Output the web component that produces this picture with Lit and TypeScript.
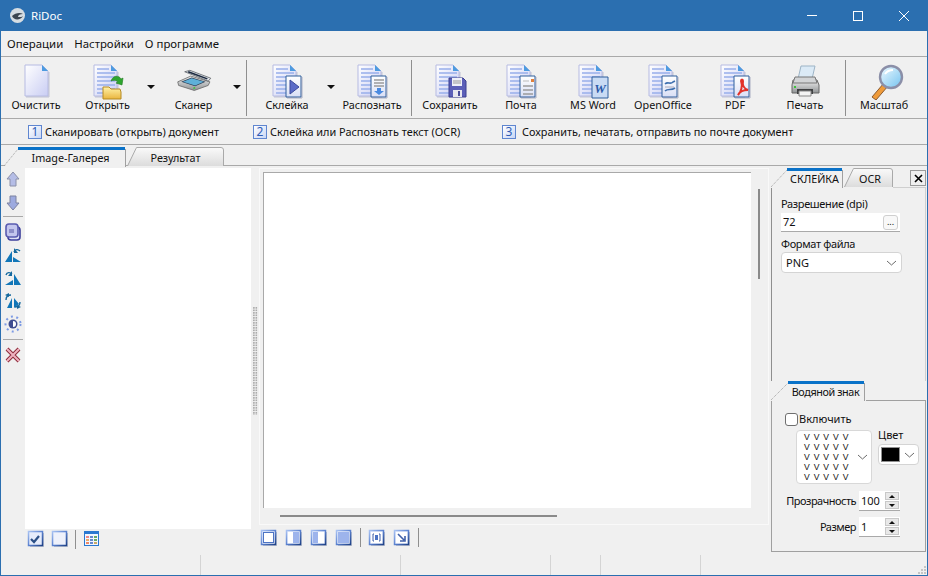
import {LitElement, css, html, svg} from 'lit';
import {customElement} from 'lit/decorators.js';

const defs = svg`
  <defs>
    <linearGradient id="page" x1="0" y1="0" x2="1" y2="1">
      <stop offset="0" stop-color="#ffffff"/>
      <stop offset="1" stop-color="#c9cdf3"/>
    </linearGradient>
    <linearGradient id="sub" x1="0" y1="0" x2="0" y2="1">
      <stop offset="0" stop-color="#ffffff"/>
      <stop offset="1" stop-color="#d9dff5"/>
    </linearGradient>
    <linearGradient id="glass" x1="0" y1="0" x2="1" y2="1">
      <stop offset="0" stop-color="#f2fbff"/>
      <stop offset="1" stop-color="#72c2f0"/>
    </linearGradient>
    <linearGradient id="folder" x1="0" y1="0" x2="0" y2="1">
      <stop offset="0" stop-color="#fff2a8"/>
      <stop offset="1" stop-color="#eab53e"/>
    </linearGradient>
    <linearGradient id="grey" x1="0" y1="0" x2="0" y2="1">
      <stop offset="0" stop-color="#f0f0f0"/>
      <stop offset="1" stop-color="#8f9294"/>
    </linearGradient>
    <linearGradient id="edge" x1="0" y1="0" x2="1" y2="1">
      <stop offset="0" stop-color="#a8c2f2"/>
      <stop offset=".5" stop-color="#5b82d0"/>
      <stop offset="1" stop-color="#1f4288"/>
    </linearGradient>
  </defs>`;

const big = (body: unknown) => html`<svg class="big" width="44" height="36" viewBox="0 0 44 36">${defs}${body}</svg>`;

// page with the folded corner, optionally ruled with blue lines
const page = (x: number, lines = true) => svg`
  <path d="M${x} 1h17l6 6v25h-23z" fill="url(#page)" stroke="#b6bbe2"/>
  <path d="M${x + 17} 1v6h6z" fill="#4d9be0"/>
  <path d="M${x + 1} 33h23v-25" fill="none" stroke="#8f93b8" opacity=".5"/>
  ${lines ? [5, 9, 13, 17, 21, 25, 29].map(y => svg`<path d="M${x + 3} ${y}h${y < 9 ? 12 : 18}" stroke="#9db2ec" stroke-width="1.6"/>`) : ''}`;

const subDoc = (body: unknown) => svg`
  <path d="M21 12h15v21h-15z" fill="url(#sub)" stroke="#2f5f9c"/>
  <path d="M37 13v21h-15" fill="none" stroke="#7f87a6" opacity=".6"/>
  ${body}`;

const toolbarIcons: Record<string, unknown> = {
  clear: big(svg`${page(11, false)}`),
  open: big(svg`${page(8)}
    <path d="M17 33v-10h6l2 2h9l1 3v7h-18z" fill="url(#folder)" stroke="#b58a22"/>
    <path d="M25 17c2-6 8-6 10-2l2-1-1 7-6-2 2-1c-2-2-5-2-7-1z" fill="#2ea62e" stroke="#1e7a1e" stroke-width=".6"/>`),
  scanner: big(svg`<g transform="translate(4 2) scale(.87 .72)">
    <path d="M2 22l15-8 22 8-2 5-16 7-18-7z" fill="url(#grey)" stroke="#666"/>
    <path d="M6 22l12-6 16 6-12 6z" fill="#2b3b52"/>
    <path d="M8 22l10-5 14 5-10 5z" fill="#5fb0d8"/>
    <path d="M10 8l6-2 24 11-3 4-6-3z" fill="#dfe3e8" stroke="#5b6065"/>
    <path d="M14 8l22 10" stroke="#1c2a40" stroke-width="2"/>
    <path d="M20 31l2-1" stroke="#32c832" stroke-width="2"/></g>`),
  glue: big(svg`${page(8)}${subDoc(svg`
    <path d="M25 16v14l9-7z" fill="#5c6cc8" stroke="#3c4b9c"/>`)}`),
  ocr: big(svg`${page(8)}${subDoc(svg`
    <path d="M24 16h10M24 19h10M24 22h10" stroke="#9a9a9a" stroke-width="1.4"/>
    <path d="M27 24h4v3h3l-5 4-5-4h3z" fill="#4a8ae0"/>`)}`),
  save: big(svg`${page(8)}
    <path d="M21 14h14l3 3v16h-17z" fill="#5b5fb8" stroke="#3d4090"/>
    <path d="M24 14h10v8h-10z" fill="#eef0f8"/>
    <path d="M25 17h8M25 19h8" stroke="#999"/>
    <path d="M25 26h9v7h-9z" fill="#e8e8f0"/>
    <path d="M30 27h2v5h-2z" fill="#4a4d99"/>`),
  mail: big(svg`${page(8)}${subDoc(svg`
    <path d="M24 22h10M24 26h10M24 30h10" stroke="#9a9a9a" stroke-width="1.4"/>
    <path d="M32 15h3v3h-3z" fill="#e2803a"/>
    <path d="M24 17h6" stroke="#bbb"/>`)}`),
  word: big(svg`${page(8)}
    <path d="M21 13h16v21h-16z" fill="#c9dbf4" stroke="#2f5f9c"/>
    <text x="29" y="29" text-anchor="middle" class="w">W</text>`),
  office: big(svg`${page(8)}${subDoc(svg`
    <path d="M24 20c3-3 5 1 8-2l2-1M24 27c3-3 6 0 10-3" fill="none" stroke="#3e6fae" stroke-width="1.6"/>
    <path d="M24 23h9" stroke="#aab"/>`)}`),
  pdf: big(svg`${page(8)}${subDoc(svg`
    <path d="M25 31c3-3 5-9 3-14 0-2 2-2 2 0-1 5 2 8 5 9-3 0-8 1-10 5z" fill="none" stroke="#e2322a" stroke-width="2"/>`)}`),
  print: big(svg`
    <path d="M18 2h14l-3 13h-14z" fill="#dbeaf6" stroke="#9db4c6"/>
    <path d="M10 16h24l2 5v8h-27v-8z" fill="url(#grey)" stroke="#666"/>
    <path d="M12 13h20l2 6h-24z" fill="#d2d4d6" stroke="#777"/>
    <path d="M14 25h16v5h-16z" fill="#3f4042"/>
    <path d="M16 27h12v5h-12z" fill="#f4f4f4" stroke="#888"/>
    <path d="M11 23h2" stroke="#3ac43a" stroke-width="2"/>`),
  zoom: big(svg`
    <path d="M10 33l12-14 4 3-12 14z" fill="#ef9b3a" stroke="#8a5a30"/>
    <circle cx="29" cy="13" r="11" fill="url(#glass)" stroke="#8b8fa8" stroke-width="2.4"/>
    <path d="M23 10c2-3 5-4 8-4" stroke="#fff" stroke-width="2" fill="none"/>`),
};

const small = (body: unknown, w = 18, h = 18) => html`<svg class="small" width=${w} height=${h} viewBox="0 0 18 18">${defs}${body}</svg>`;

const sideIcons = {
  up: small(svg`<path d="M9 2l6 7h-3v7h-6v-7h-3z" fill="#b5bde6" stroke="#8b90a8"/>`),
  down: small(svg`<path d="M9 16l6-7h-3v-7h-6v7h-3z" fill="#9daadf" stroke="#7d82a0"/>`),
  pages: small(svg`<rect x="4" y="4" width="12" height="13" rx="3" fill="#dfe1f6" stroke="#3c3f9c" stroke-width="1.6"/><rect x="2" y="1" width="12" height="13" rx="3" fill="#c3c6ee" stroke="#5a5cb0" stroke-width="1.6"/><path d="M5 6h5v4h-5z" fill="#8d8fc8"/>`),
  left: small(svg`<path d="M1 16l7-11v11zM9 16v-5l8 5z" fill="#1176b8"/><path d="M10 6c1-3 4-3 6-1" fill="none" stroke="#14689e" stroke-width="1.4"/><path d="M10 2v5h4z" fill="#14689e"/>`),
  right: small(svg`<path d="M17 16l-7-11v11zM9 16v-5l-8 5z" fill="#1176b8"/><path d="M2 6c1-3 4-3 6-1" fill="none" stroke="#14689e" stroke-width="1.4"/><path d="M8 2v5h-4z" fill="#14689e"/>`),
  flip: small(svg`<path d="M3 16l5-10v10zM10 6v10l5-4z" fill="#1176b8"/><path d="M2 8c0-3 2-5 5-5M16 10c0 3-2 5-5 5" fill="none" stroke="#14689e" stroke-width="1.4"/><path d="M1 3l4-2v4zM17 15l-4 2v-4z" fill="#14689e"/>`),
  bright: small(svg`<circle cx="9" cy="9" r="4.500" fill="#3f4d90"/><path d="M9 6a3 3 0 0 1 0 6z" fill="#fff"/><g stroke="#7c9ae4" stroke-width="2" stroke-dasharray="2 3.500" fill="none"><circle cx="9" cy="9" r="7.500"/></g>`),
  del: small(svg`<path d="M3 3l12 12M15 3l-12 12" stroke="#8d2b3a" stroke-width="4"/><path d="M3 3l12 12M15 3l-12 12" stroke="#efb2c0" stroke-width="2"/>`),
};

// square blue-framed button of the lower toolbars
const frame = (inner: unknown) => small(svg`
  <rect x="3" y="3" width="14" height="14" fill="#7d8aa8" opacity=".45"/>
  <rect x="1.500" y="1.500" width="14" height="14" fill="#e6ecfb" stroke="url(#edge)" stroke-width="1.500"/>
  ${inner}`);

const bottomIcons = {
  check: frame(svg`<path d="M4 9l3 3 5-6" fill="none" stroke="#2b4f86" stroke-width="2.200"/>`),
  blank: frame(svg`<rect x="3" y="3" width="11" height="11" fill="#eef1fb"/>`),
  grid: small(svg`<rect x="1.500" y="1.500" width="14" height="14" fill="#f2f6fe" stroke="#2a78d0"/><path d="M1 1h15v3h-15z" fill="#2a78d0"/>
    <path d="M3 6h3v2h-3z" fill="#e88"/><path d="M7 6h3v2h-3z" fill="#68c"/><path d="M11 6h3v2h-3z" fill="#6a6"/>
    <path d="M3 9h3v2h-3z" fill="#ea6"/><path d="M7 9h3v2h-3z" fill="#68c"/><path d="M11 9h3v2h-3z" fill="#6a6"/>
    <path d="M3 12h3v2h-3z" fill="#e86"/><path d="M7 12h3v2h-3z" fill="#68c"/><path d="M11 12h3v2h-3z" fill="#ca6"/>`),
  white: frame(svg`<rect x="3.500" y="3.500" width="10" height="10" fill="#fff" stroke="#4d74c4"/>`),
  halfR: frame(svg`<rect x="3" y="3" width="5" height="11" fill="#fff"/><rect x="8" y="3" width="6" height="11" fill="#9db4ec"/>`),
  halfL: frame(svg`<rect x="3" y="3" width="5" height="11" fill="#9db4ec"/><rect x="8" y="3" width="6" height="11" fill="#fff"/>`),
  full: frame(svg`<rect x="3" y="3" width="11" height="11" fill="#9db4ec"/>`),
  fit: frame(svg`<rect x="3" y="3" width="11" height="11" fill="#fff"/><path d="M6 5h-1v7h1M11 5h1v7h-1" fill="none" stroke="#3f5fa8"/><rect x="7" y="6" width="3" height="5" fill="#4d74c4"/>`),
  arrow: frame(svg`<rect x="3" y="3" width="11" height="11" fill="#fff"/><path d="M5 5l6 6M12 7v5h-5" fill="none" stroke="#3f5fa8" stroke-width="1.600"/>`),
};

const chevron = html`<svg class="chev" width="11" height="6" viewBox="0 0 11 6"><path d="M1 1l4.500 4 4.500-4" fill="none" stroke="#6a6a6a"/></svg>`;

const arrowDown = html`<svg class="drop" width="8" height="4" viewBox="0 0 8 4"><path d="M0 0h8l-4 4z" fill="#111"/></svg>`;

const spin = html`<span class="spin">
  <span class="sb"><svg width="6" height="3"><path d="M3 0l3 3h-6z" fill="#111"/></svg></span>
  <span class="sb"><svg width="6" height="3"><path d="M0 0h6l-3 3z" fill="#111"/></svg></span>
</span>`;

@customElement('app-root')
export class AppRoot extends LitElement {
  static styles = css`
    :host {
      box-sizing: border-box;
      display: flex;
      flex-direction: column;
      width: 928px;
      height: 576px;
      overflow: hidden;
      border: solid #2b6fb0;
      border-width: 0 1px 1px;
      background: #f0f0f0;
      font: 12px/14px "Noto Sans", sans-serif;
      color: #111;
    }

    * {
      box-sizing: border-box;
    }

    svg {
      display: block;
      flex: none;
    }

    .title {
      display: flex;
      align-items: center;
      flex: none;
      height: 31px;
      margin: 0 -1px;
      padding: 0 0 0 9px;
      background: #2b6fb0;
      color: #fff;
    }

    .title .name {
      margin-left: 5px;
      font-size: 11.500px;
    }

    .win {
      display: flex;
      margin-left: auto;
      padding-right: 1px;
    }

    .win span {
      display: flex;
      justify-content: center;
      align-items: center;
      width: 46px;
      height: 31px;
    }

    .menu {
      display: flex;
      flex: none;
      gap: 11px;
      align-items: center;
      height: 26px;
      padding-left: 6px;
      border-bottom: 1px solid #a9a9a9;
      font-size: 11.400px;
    }

    .tools {
      display: flex;
      flex: none;
      height: 62px;
      border-bottom: 1px solid #a9a9a9;
    }

    .tool {
      display: flex;
      flex-direction: column;
      align-items: center;
      padding-top: 7px;
      white-space: nowrap;
      font-size: 10.800px;
    }

    .tool .label {
      margin-top: -2px;
    }

    .drop-slot {
      display: flex;
      justify-content: center;
      align-items: center;
      height: 60px;
    }

    .bar-sep {
      width: 1px;
      height: 56px;
      margin-top: 3px;
      background: #8f8f8f;
    }

    .steps {
      display: flex;
      flex: none;
      align-items: center;
      height: 26px;
      padding-left: 27px;
      border-bottom: 1px solid #a9a9a9;
      font-size: 10.900px;
    }

    .step {
      display: flex;
      align-items: center;
      gap: 3px;
      white-space: nowrap;
    }

    .num {
      width: 14px;
      height: 14px;
      border: 1px solid #5f86d0;
      background: linear-gradient(135deg, #fff, #c9d6f5);
      color: #2e5bb5;
      font-size: 12px;
      line-height: 12px;
      text-align: center;
    }

    .tabs {
      display: flex;
      flex: none;
      height: 21px;
      padding: 2px 0 0 3px;
      border-bottom: 1px solid #a9a9a9;
    }

    .tab {
      position: relative;
      display: flex;
      justify-content: center;
      align-items: center;
      flex: none;
      font-size: 10.800px;
      white-space: nowrap;
    }

    .tab svg {
      position: absolute;
      top: 0;
      left: 0;
    }

    .tab span {
      position: relative;
      top: 1px;
    }

    .main {
      display: flex;
      flex: 1;
      min-height: 0;
    }

    .left {
      display: flex;
      flex: none;
      flex-direction: column;
      width: 250px;
    }

    .left-top {
      display: flex;
      flex: 1;
      min-height: 0;
    }

    .side {
      display: flex;
      flex: none;
      flex-direction: column;
      align-items: center;
      width: 24px;
      padding-top: 2px;
    }

    .side .small {
      margin: 2px 0 3px;
    }

    .side .gap {
      height: 1px;
    }

    .side hr {
      width: 20px;
      height: 1px;
      margin: 1px 0 4px;
      border: 0;
      background: #a9a9a9;
    }

    .side hr.low {
      margin: 3px 0 4px;
    }

    .gallery {
      flex: 1;
      margin-top: 2px;
      background: #fff;
    }

    .foot {
      display: flex;
      flex: none;
      align-items: center;
      height: 23px;
      padding-bottom: 3px;
    }

    .foot.g {
      padding-left: 26px;
      gap: 6px;
    }

    .foot.g .rule + .small {
      margin-left: 1px;
    }

    .foot .rule {
      width: 1px;
      height: 19px;
      background: #8f8f8f;
    }

    .split {
      display: flex;
      flex: none;
      justify-content: center;
      width: 8px;
      padding-top: 141px;
    }

    .split i {
      width: 5px;
      height: 108px;
      background: radial-gradient(circle at 1px 1px, #aaa 0.8px, transparent 1px) 0 0 / 2.500px 2.500px;
    }

    .center {
      display: flex;
      flex: none;
      flex-direction: column;
      width: 510px;
      padding-top: 2px;
    }

    .viewer {
      display: flex;
      flex-direction: column;
      flex: 1;
      min-height: 0;
      padding: 3px 1px 0 3px;
      border: 1px solid #f9f9f9;
    }

    .view-top {
      display: flex;
      flex: 1;
      min-height: 0;
    }

    .canvas {
      flex: 1;
      border-top: 1px solid #a9a9a9;
      border-left: 1px solid #a9a9a9;
      background: #fff;
    }

    .vscroll {
      flex: none;
      width: 16px;
      padding: 17px 0 0 7px;
    }

    .vscroll i {
      display: block;
      width: 2px;
      height: 90px;
      background: #8a8a8a;
    }

    .hscroll {
      flex: none;
      height: 16px;
      padding: 7px 0 0 17px;
    }

    .hscroll i {
      display: block;
      width: 277px;
      height: 2px;
      background: #8a8a8a;
    }

    .foot.c {
      height: 27px;
      padding: 0 0 2px 1px;
      gap: 7px;
    }

    .right {
      display: flex;
      flex: 1;
      flex-direction: column;
      min-width: 0;
      padding: 2px 1px 0 2px;
    }

    .r-head {
      display: flex;
      flex: none;
      height: 20px;
    }

    .r-fill {
      display: flex;
      flex: 1;
      justify-content: flex-end;
      height: 20px;
      border-bottom: 1px solid #cfcfcf;
    }

    .close {
      display: flex;
      justify-content: center;
      align-items: center;
      width: 16px;
      height: 16px;
      margin-top: 2px;
      border: 1px solid #9a9a9a;
    }

    .r-body {
      display: flex;
      flex-direction: column;
      flex: none;
      height: 193px;
      padding: 9px 0 0 9px;
      border-left: 1px solid #8f8f8f;
      border-right: 1px solid #cfcfcf;
      font-size: 11px;
    }

    .field-label {
      height: 15px;
      letter-spacing: -.35px;
    }

    .input {
      display: flex;
      align-items: center;
      justify-content: space-between;
      width: 119px;
      height: 19px;
      margin-top: 1px;
      padding: 0 2px;
      background: #fff;
      border-bottom: 1px solid #a9a9a9;
    }

    .dots {
      width: 15px;
      height: 15px;
      border: 1px solid #cfcfcf;
      border-radius: 3px;
      background: #f8f8f8;
      font-size: 9px;
      line-height: 11px;
      text-align: center;
    }

    .select {
      display: flex;
      align-items: center;
      justify-content: space-between;
      width: 121px;
      height: 21px;
      padding: 0 4px;
      border: 1px solid #d4d4d4;
      border-radius: 4px;
      background: #fff;
    }

    .wm-box {
      display: flex;
      flex: 1;
      flex-direction: column;
      min-height: 0;
      border: 1px solid #a0a0a0;
      border-top: 0;
      font-size: 11px;
    }

    .wm-head {
      display: flex;
      flex: none;
      height: 20px;
    }

    .wm-head .tab {
      letter-spacing: -.4px;
    }

    .wm-line {
      flex: 1;
      border-bottom: 1px solid #a0a0a0;
    }

    .check {
      display: flex;
      align-items: center;
      gap: 1px;
      margin: 11px 0 0 13px;
    }

    .check i {
      width: 13px;
      height: 13px;
      border: 1px solid #6f6f6f;
      border-radius: 3px;
      background: #fff;
    }

    .pattern-row {
      display: flex;
      gap: 6px;
      margin: 4px 0 0 24px;
    }

    .pattern {
      display: flex;
      align-items: center;
      justify-content: space-between;
      width: 76px;
      height: 54px;
      padding: 0 3px 0 5px;
      border: 1px solid #d8d8d8;
      border-radius: 4px;
      background: #fff;
    }

    .vs {
      display: grid;
      grid-template-columns: repeat(5, 9.700px);
      grid-auto-rows: 10px;
      font: 8.600px/10px "Liberation Sans", sans-serif;
      text-align: center;
    }

    .color-label {
      margin-top: -2px;
    }

    .color {
      display: flex;
      align-items: center;
      justify-content: space-between;
      width: 41px;
      height: 21px;
      margin-top: 2px;
      padding: 0 3px 0 2px;
      border: 1px solid #d4d4d4;
      border-radius: 4px;
      background: #fff;
    }

    .swatch {
      width: 19px;
      height: 15px;
      border: 1px solid #909090;
      background: #000;
    }

    .spin-row {
      display: flex;
      align-items: center;
      justify-content: flex-end;
      gap: 3px;
      width: 128px;
      height: 20px;
      letter-spacing: -.5px;
    }

    .spin-row .val {
      display: flex;
      align-items: center;
      justify-content: space-between;
      width: 41px;
      height: 20px;
      padding: 0 1px 0 2px;
      background: #fff;
      border-bottom: 1px solid #a9a9a9;
      letter-spacing: 0;
    }

    .spin {
      display: flex;
      flex-direction: column;
      gap: 1px;
    }

    .sb {
      display: flex;
      justify-content: center;
      align-items: center;
      width: 14px;
      height: 8px;
      border: 1px solid #c8c8c8;
      background: #e8e8e8;
    }

    .status {
      display: flex;
      flex: none;
      height: 23px;
      padding-top: 3px;
      padding-left: 199px;
    }

    .status i {
      width: 1px;
      height: 20px;
      background: #d4d4d4;
    }

    .grip {
      align-self: flex-end;
      margin-left: auto;
    }

    .w {
      font: italic 700 13px "Liberation Serif", serif;
      fill: #2a5aa8;
    }
  `;

  private toolItem(icon: string, label: string, width: number) {
    return html`
      <div class="tool" style="width:${width}px">
        ${toolbarIcons[icon]}
        <span class="label">${label}</span>
      </div>
    `;
  }

  private tabShape(w: number, active: boolean, h: number, d: number) {
    if (active) {
      return html`<svg width=${w} height=${h + 1} viewBox="0 0 ${w} ${h + 1}">
        <path d="M0 ${h + 1}L${d} 2h${w - d - 2}V${h + 1}z" fill="#f0f0f0"/>
        <path d="M0 ${h}L${d} 2" fill="none" stroke="#a0a0a0" stroke-dasharray="1 1"/>
        <path d="M${w - 1.500} 2V${h + 1}" stroke="#a0a0a0"/>
        <path d="M${d} 1.500h${w - d - 2}" stroke="#0a72c8" stroke-width="3"/>
      </svg>`;
    }
    return html`<svg width=${w} height=${h} viewBox="0 0 ${w} ${h}">
      <defs><linearGradient id="tabg" x1="0" y1="0" x2="0" y2="1"><stop offset="0" stop-color="#fafafa"/><stop offset="1" stop-color="#dcdcdc"/></linearGradient></defs>
      <path d="M.5 ${h}L9 1.500a1 1 0 0 1 1-1H${w - 3}a2.500 2.500 0 0 1 2.500 2.500V${h}" fill="url(#tabg)" stroke="#a9a9a9"/>
    </svg>`;
  }

  // pad pushes the caption past the slanted left edge
  private tab(label: string, w: number, active: boolean, pad = 0, d = 14, h = 19) {
    return html`
      <div class="tab" style="width:${w}px;height:${active ? h + 1 : h}px;padding-left:${pad}px">
        ${this.tabShape(w, active, h, d)}
        <span>${label}</span>
      </div>
    `;
  }

  render() {
    return html`
      <div class="title">
        <svg width="17" height="17" viewBox="0 0 17 17">
          <circle cx="8.500" cy="8.500" r="7.500" fill="#d6dde2"/>
          <path d="M3 9c3-3 8-4 11-2-3 0-5 1-5 3 3 0 4 0 5-1-2 4-9 5-11 0z" fill="#3c4650"/>
        </svg>
        <span class="name">RiDoc</span>
        <div class="win">
          <span><svg width="10" height="1"><path d="M0 .5h10" stroke="#fff"/></svg></span>
          <span><svg width="10" height="10"><rect x=".5" y=".5" width="9" height="9" fill="none" stroke="#fff"/></svg></span>
          <span><svg width="10" height="10"><path d="M0 0l10 10M10 0l-10 10" stroke="#fff"/></svg></span>
        </div>
      </div>

      <div class="menu">
        <span>Операции</span>
        <span>Настройки</span>
        <span>О программе</span>
      </div>

      <div class="tools">
        ${this.toolItem('clear', 'Очистить', 70)}
        ${this.toolItem('open', 'Открыть', 73)}
        <div class="drop-slot" style="width:13px">${arrowDown}</div>
        ${this.toolItem('scanner', 'Сканер', 73)}
        <div class="drop-slot" style="width:13px">${arrowDown}</div>
        <div class="drop-slot" style="width:3px"></div>
        <div class="bar-sep"></div>
        ${this.toolItem('glue', 'Склейка', 80)}
        <div class="drop-slot" style="width:7px">${arrowDown}</div>
        ${this.toolItem('ocr', 'Распознать', 76)}
        <div class="bar-sep" style="margin-left:1px"></div>
        ${this.toolItem('save', 'Сохранить', 76)}
        ${this.toolItem('mail', 'Почта', 66)}
        ${this.toolItem('word', 'MS Word', 78)}
        ${this.toolItem('office', 'OpenOffice', 62)}
        ${this.toolItem('pdf', 'PDF', 82)}
        ${this.toolItem('print', 'Печать', 58)}
        <div class="drop-slot" style="width:11px"></div>
        <div class="bar-sep"></div>
        ${this.toolItem('zoom', 'Масштаб', 76)}
      </div>

      <div class="steps">
        <div class="step" style="width:225px"><span class="num">1</span>Сканировать (открыть) документ</div>
        <div class="step" style="width:249px"><span class="num">2</span>Склейка или Распознать текст (OCR)</div>
        <div class="step" style="gap:6px"><span class="num">3</span>Сохранить, печатать, отправить по почте документ</div>
      </div>

      <div class="tabs">
        ${this.tab('Image-Галерея', 123, true, 10)}
        ${this.tab('Результат', 97, false)}
      </div>

      <div class="main">
        <div class="left">
          <div class="left-top">
            <div class="side">
              ${sideIcons.up}
              <span class="gap"></span>
              ${sideIcons.down}
              <hr>
              ${sideIcons.pages}
              ${sideIcons.left}
              ${sideIcons.right}
              ${sideIcons.flip}
              ${sideIcons.bright}
              <hr class="low">
              ${sideIcons.del}
            </div>
            <div class="gallery"></div>
          </div>
          <div class="foot g">
            ${bottomIcons.check}
            ${bottomIcons.blank}
            <div class="rule"></div>
            ${bottomIcons.grid}
          </div>
        </div>

        <div class="split"><i></i></div>

        <div class="center">
          <div class="viewer">
            <div class="view-top">
              <div class="canvas"></div>
              <div class="vscroll"><i></i></div>
            </div>
            <div class="hscroll"><i></i></div>
          </div>
          <div class="foot c">
            ${bottomIcons.white}
            ${bottomIcons.halfR}
            ${bottomIcons.halfL}
            ${bottomIcons.full}
            <div class="rule"></div>
            ${bottomIcons.fit}
            ${bottomIcons.arrow}
            <div class="rule"></div>
          </div>
        </div>

        <div class="right">
          <div class="r-head">
            ${this.tab('СКЛЕЙКА', 73, true, 14, 16)}
            ${this.tab('OCR', 49, false, 3)}
            <div class="r-fill">
              <div class="close">
                <svg width="9" height="9"><path d="M1 1l7 7M8 1l-7 7" stroke="#000" stroke-width="1.600"/></svg>
              </div>
            </div>
          </div>
          <div class="r-body">
            <div class="field-label">Разрешение (dpi)</div>
            <div class="input"><span>72</span><span class="dots">...</span></div>
            <div class="field-label" style="margin-top:5px">Формат файла</div>
            <div class="select"><span>PNG</span>${chevron}</div>
          </div>
          <div class="wm-head">
            ${this.tab('Водяной знак', 95, true, 14, 17)}
            <div class="wm-line"></div>
          </div>
          <div class="wm-box">
            <div class="check"><i></i>Включить</div>
            <div class="pattern-row">
              <div class="pattern">
                <div class="vs">${Array.from({length: 25}, () => html`<span>V</span>`)}</div>
                ${chevron}
              </div>
              <div>
                <div class="color-label">Цвет</div>
                <div class="color"><span class="swatch"></span>${chevron}</div>
              </div>
            </div>
            <div class="spin-row" style="margin-top:7px">Прозрачность <div class="val">100${spin}</div></div>
            <div class="spin-row" style="margin-top:6px">Размер <div class="val">1${spin}</div></div>
          </div>
        </div>
      </div>

      <div class="status">
        <i></i><i style="margin-left:199px"></i><i style="margin-left:149px"></i><i style="margin-left:49px"></i><i style="margin-left:99px"></i>
        <svg class="grip" width="9" height="9" viewBox="0 0 9 9">
          <path d="M6 0h2v2h-2zM3 3h2v2h-2zM6 3h2v2h-2zM0 6h2v2h-2zM3 6h2v2h-2zM6 6h2v2h-2z" fill="#c4c4c4"/>
        </svg>
      </div>
    `;
  }
}

declare global {
  interface HTMLElementTagNameMap {
    'app-root': AppRoot;
  }
}
